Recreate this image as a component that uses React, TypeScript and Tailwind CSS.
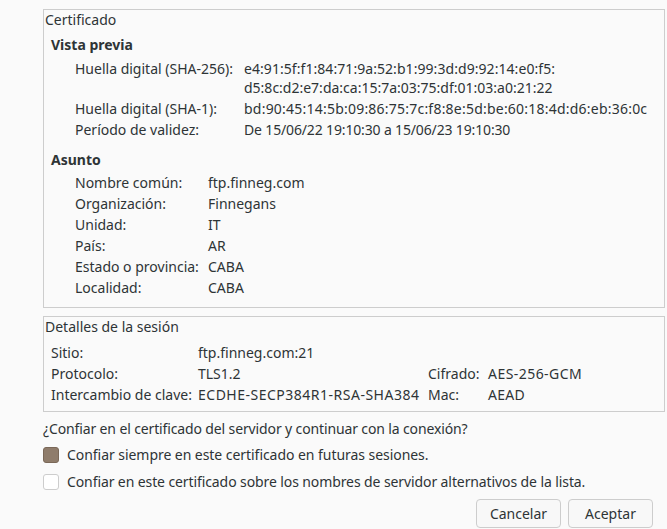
import React from 'react';

const font = { fontFamily: '"Noto Sans", "DejaVu Sans", sans-serif' };

function Row({ label, value, labelW }: { label: string; value: React.ReactNode; labelW: string }) {
  return (
    <div className="flex">
      <div className={`${labelW} shrink-0`}>{label}</div>
      <div>{value}</div>
    </div>
  );
}

export default function App() {
  const subject = [
    ['Nombre común:', 'ftp.finneg.com'],
    ['Organización:', 'Finnegans'],
    ['Unidad:', 'IT'],
    ['País:', 'AR'],
    ['Estado o provincia:', 'CABA'],
    ['Localidad:', 'CABA'],
  ];

  return (
    <div
      className="w-[667px] h-[529px] overflow-hidden bg-[#fafafa] text-[14px] leading-[21px] text-[#2e3436]"
      style={font}
    >
      <div className="pt-[9px] pl-[43px]">
        {/* Certificado */}
        <div className="w-[622px] h-[299px] border border-[#cdcdcd] pl-[1px]">
          <div className="leading-[19px]">Certificado</div>
          <div className="pl-[6px] pt-[5px]">
            <div className="font-bold">Vista previa</div>
            <div className="pl-[24px] pt-[3px]">
              <div className="flex pb-[1px]">
                <div className="w-[169px] shrink-0">Huella digital (SHA-256):</div>
                <div className="leading-[19px] pt-[1px]">
                  <div className="tracking-[0.06px]">e4:91:5f:f1:84:71:9a:52:b1:99:3d:d9:92:14:e0:f5:</div>
                  <div>d5:8c:d2:e7:da:ca:15:7a:03:75:df:01:03:a0:21:22</div>
                </div>
              </div>
              <Row
                labelW="w-[169px]"
                label="Huella digital (SHA-1):"
                value={<span className="tracking-[0.22px]">bd:90:45:14:5b:09:86:75:7c:f8:8e:5d:be:60:18:4d:d6:eb:36:0c</span>}
              />
              <Row
                labelW="w-[169px]"
                label="Período de validez:"
                value={<span className="tracking-[-0.15px]">De 15/06/22 19:10:30 a 15/06/23 19:10:30</span>}
              />
            </div>
            <div className="font-bold pt-[9px]">Asunto</div>
            <div className="pl-[24px] pt-[2px]">
              {subject.map(([l, v]) => (
                <Row key={l} labelW="w-[133px]" label={l} value={v} />
              ))}
            </div>
          </div>
        </div>

        {/* Detalles de la sesión */}
        <div className="mt-[8px] w-[622px] h-[96px] border border-[#cdcdcd] pl-[1px]">
          <div className="leading-[19px]">Detalles de la sesión</div>
          <div className="pl-[6px] pt-[6px] grid grid-cols-[147px_230px_60px_1fr]">
            <div>Sitio:</div>
            <div className="col-span-3">ftp.finneg.com:21</div>
            <div>Protocolo:</div>
            <div>TLS1.2</div>
            <div>Cifrado:</div>
            <div className="tracking-[0.45px]">AES-256-GCM</div>
            <div>Intercambio de clave:</div>
            <div className="tracking-[0.5px]">ECDHE-SECP384R1-RSA-SHA384</div>
            <div>Mac:</div>
            <div className="tracking-[0.3px]">AEAD</div>
          </div>
        </div>

        <div className="pt-[6px] tracking-[-0.13px]">
          ¿Confiar en el certificado del servidor y continuar con la conexión?
        </div>

        <div className="flex items-center gap-[8px] h-[27px] mt-[2px]">
          <span className="w-[16px] h-[16px] rounded-[3px] bg-[#8f7c6b] border border-[#7a6858] shrink-0" />
          <span className="tracking-[-0.05px]">Confiar siempre en este certificado en futuras sesiones.</span>
        </div>
        <div className="flex items-center gap-[8px] h-[27px]">
          <span className="w-[16px] h-[16px] rounded-[3px] bg-white border border-[#cdcdcd] shrink-0" />
          <span className="tracking-[-0.1px]">
            Confiar en este certificado sobre los nombres de servidor alternativos de la lista.
          </span>
        </div>

        <div className="flex justify-end gap-[7px] pr-[14px] pt-[4px]">
          <button className="w-[85px] h-[29px] border border-[#cdcdcd] rounded-[4px] bg-[#f8f8f8] text-[#2e3436]">
            Cancelar
          </button>
          <button className="w-[85px] h-[29px] border border-[#cdcdcd] rounded-[4px] bg-[#f8f8f8] text-[#2e3436]">
            Aceptar
          </button>
        </div>
      </div>
    </div>
  );
}
